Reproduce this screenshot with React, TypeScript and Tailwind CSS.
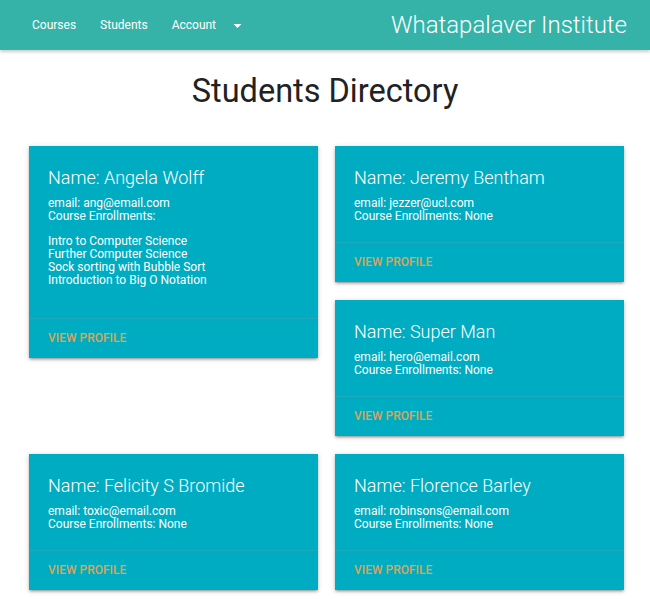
type Student = {
  name: string;
  email: string;
  courses: string[];
};

const students: Record<string, Student> = {
  angela: {
    name: "Angela Wolff",
    email: "ang@email.com",
    courses: [
      "Intro to Computer Science",
      "Further Computer Science",
      "Sock sorting with Bubble Sort",
      "Introduction to Big O Notation",
    ],
  },
  jeremy: { name: "Jeremy Bentham", email: "jezzer@ucl.com", courses: [] },
  superman: { name: "Super Man", email: "hero@email.com", courses: [] },
  felicity: { name: "Felicity S Bromide", email: "toxic@email.com", courses: [] },
  florence: { name: "Florence Barley", email: "robinsons@email.com", courses: [] },
};

function StudentCard({ student }: { student: Student }) {
  return (
    <div className="w-[289px] bg-[#00acc1] text-white shadow-[0_2px_2px_0_rgba(0,0,0,0.14),0_3px_1px_-2px_rgba(0,0,0,0.12),0_1px_5px_0_rgba(0,0,0,0.2)]">
      <div className="px-[19px] pt-[19px] pb-[19px]">
        <h2 className="mb-[6px] text-[18px] leading-[26px] font-light">Name: {student.name}</h2>
        <p className="text-[12px] leading-[13px]">email: {student.email}</p>
        {student.courses.length > 0 ? (
          <>
            <p className="text-[12px] leading-[13px]">Course Enrollments:</p>
            <ul className="my-[12px] text-[12px] leading-[13px]">
              {student.courses.map((course) => (
                <li key={course}>{course}</li>
              ))}
            </ul>
          </>
        ) : (
          <p className="text-[12px] leading-[13px]">Course Enrollments: None</p>
        )}
      </div>
      <div className="border-t border-[rgba(160,160,160,0.2)] px-[19px] py-[13px]">
        <a className="block text-[12px] leading-[13px] font-medium uppercase text-[#d7a65e]">View Profile</a>
      </div>
    </div>
  );
}

export default function App() {
  return (
    <div className="min-h-[599px] bg-white font-['Roboto',sans-serif] text-[#222]">
      <nav className="flex h-[50px] items-center justify-between bg-[#35b3a8] text-white shadow-[0_2px_3px_0_rgba(0,0,0,0.2)]">
        <ul className="flex items-center pl-[20px] text-[12px]">
          <li className="px-[12px]">Courses</li>
          <li className="px-[12px]">Students</li>
          <li className="flex items-center px-[12px]">
            Account
            <svg className="ml-[12px] h-[19px] w-[19px]" viewBox="0 0 24 24" fill="currentColor">
              <path d="M7 10l5 5 5-5z" />
            </svg>
          </li>
        </ul>
        <div className="pr-[23px] text-[24px] font-light">Whatapalaver Institute</div>
      </nav>

      <h1 className="mt-[21px] mb-[35px] text-center text-[32.5px] leading-[40px] font-normal">Students Directory</h1>

      <div className="flex flex-col gap-[18px] pl-[29px]">
        <div className="flex items-start gap-[17px]">
          <StudentCard student={students.angela} />
          <div className="flex flex-col gap-[18px]">
            <StudentCard student={students.jeremy} />
            <StudentCard student={students.superman} />
          </div>
        </div>
        <div className="flex items-start gap-[17px]">
          <StudentCard student={students.felicity} />
          <StudentCard student={students.florence} />
        </div>
      </div>
    </div>
  );
}
